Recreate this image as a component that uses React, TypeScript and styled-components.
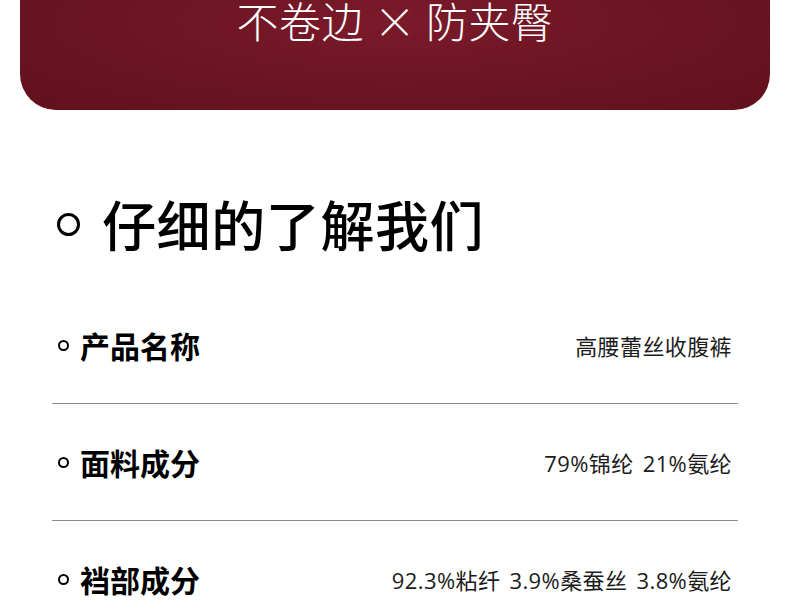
import styled, { createGlobalStyle } from "styled-components";

const GlobalStyle = createGlobalStyle`
  html, body {
    margin: 0;
    padding: 0;
    background: #ffffff;
  }
  body {
    font-family: "Noto Sans CJK SC", "Noto Sans", sans-serif;
    color: #111;
  }
`;

const Page = styled.div`
  width: 790px;
  height: 611px;
  overflow: hidden;
  background: #fff;
`;

const Banner = styled.div`
  margin: 0 20px;
  height: 110px;
  border-radius: 0 0 36px 36px;
  background: radial-gradient(ellipse at 50% 20%, #7b1a2a 0%, #6e1524 45%, #62101d 100%);
  display: flex;
  justify-content: center;
`;

const BannerTitle = styled.div`
  margin-top: -2px;
  font-size: 42px;
  line-height: 44px;
  font-weight: 300;
  color: #fff;
  letter-spacing: 0.5px;
`;

const Heading = styled.h2`
  margin: 84px 0 0 57px;
  height: 60px;
  display: flex;
  align-items: center;
  gap: 22px;
  font-size: 54px;
  line-height: 60px;
  font-weight: 500;
  letter-spacing: 0.6px;
  color: #000;
`;

const Ring = styled.span<{ $size: number; $stroke: number }>`
  flex: none;
  width: ${(p) => p.$size}px;
  height: ${(p) => p.$size}px;
  box-sizing: border-box;
  border-radius: 50%;
  border: ${(p) => p.$stroke}px solid #000;
`;

const List = styled.div`
  margin: 33px 52px 0;
`;

const Row = styled.div`
  height: 116px;
  padding: 0 6px;
  display: flex;
  align-items: center;
  justify-content: space-between;
  border-bottom: 1px solid #8c8c8c;
  &:last-child {
    border-bottom: none;
  }
`;

const Label = styled.div`
  display: flex;
  align-items: center;
  gap: 11px;
  font-size: 30px;
  font-weight: 700;
  color: #000;
`;

const Value = styled.div`
  font-family: "Open Sans", "Noto Sans CJK SC", sans-serif;
  font-size: 22px;
  font-weight: 400;
  letter-spacing: 0.4px;
  word-spacing: 3px;
  color: #1c1c1c;
`;

const rows = [
  { label: "产品名称", value: "高腰蕾丝收腹裤" },
  { label: "面料成分", value: "79%锦纶 21%氨纶" },
  { label: "裆部成分", value: "92.3%粘纤 3.9%桑蚕丝 3.8%氨纶" },
];

export default function App() {
  return (
    <Page>
      <GlobalStyle />
      <Banner>
        <BannerTitle>不卷边 × 防夹臀</BannerTitle>
      </Banner>
      <Heading>
        <Ring $size={23} $stroke={3} />
        仔细的了解我们
      </Heading>
      <List>
        {rows.map((r) => (
          <Row key={r.label}>
            <Label>
              <Ring $size={11} $stroke={2} />
              {r.label}
            </Label>
            <Value>{r.value}</Value>
          </Row>
        ))}
      </List>
    </Page>
  );
}
